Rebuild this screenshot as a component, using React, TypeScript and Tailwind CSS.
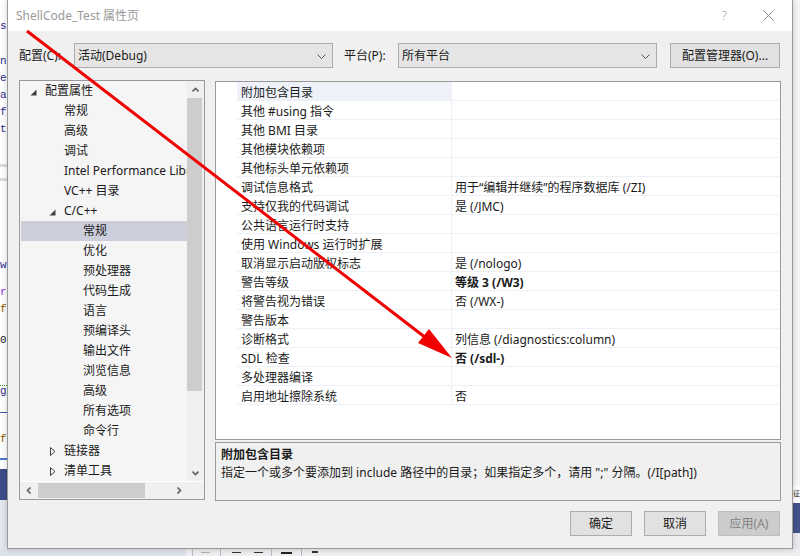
import React from 'react';

type TreeNode = {
  label: string;
  level: 0 | 1 | 2;
  toggle?: 'open' | 'closed';
  selected?: boolean;
};

type PropRow = {
  name: string;
  value?: string;
  bold?: boolean;
};

const treeNodes: TreeNode[] = [
  { label: '配置属性', level: 0, toggle: 'open' },
  { label: '常规', level: 1 },
  { label: '高级', level: 1 },
  { label: '调试', level: 1 },
  { label: 'Intel Performance Libraries', level: 1 },
  { label: 'VC++ 目录', level: 1 },
  { label: 'C/C++', level: 1, toggle: 'open' },
  { label: '常规', level: 2, selected: true },
  { label: '优化', level: 2 },
  { label: '预处理器', level: 2 },
  { label: '代码生成', level: 2 },
  { label: '语言', level: 2 },
  { label: '预编译头', level: 2 },
  { label: '输出文件', level: 2 },
  { label: '浏览信息', level: 2 },
  { label: '高级', level: 2 },
  { label: '所有选项', level: 2 },
  { label: '命令行', level: 2 },
  { label: '链接器', level: 1, toggle: 'closed' },
  { label: '清单工具', level: 1, toggle: 'closed' },
];

const indent = ['pl-[10px]', 'pl-[29px]', 'pl-[48px]'];

const propRows: PropRow[] = [
  { name: '附加包含目录' },
  { name: '其他 #using 指令' },
  { name: '其他 BMI 目录' },
  { name: '其他模块依赖项' },
  { name: '其他标头单元依赖项' },
  { name: '调试信息格式', value: '用于“编辑并继续”的程序数据库 (/ZI)' },
  { name: '支持仅我的代码调试', value: '是 (/JMC)' },
  { name: '公共语言运行时支持' },
  { name: '使用 Windows 运行时扩展' },
  { name: '取消显示启动版权标志', value: '是 (/nologo)' },
  { name: '警告等级', value: '等级 3 (/W3)', bold: true },
  { name: '将警告视为错误', value: '否 (/WX-)' },
  { name: '警告版本' },
  { name: '诊断格式', value: '列信息 (/diagnostics:column)' },
  { name: 'SDL 检查', value: '否 (/sdl-)', bold: true },
  { name: '多处理器编译' },
  { name: '启用地址擦除系统', value: '否' },
];

function Chevron({ dir }: { dir: 'up' | 'down' | 'left' | 'right' }) {
  const points = {
    up: '0.5,4.5 3.5,1.5 6.5,4.5',
    down: '0.5,1.5 3.5,4.5 6.5,1.5',
    left: '4.5,0.5 1.5,3.5 4.5,6.5',
    right: '1.5,0.5 4.5,3.5 1.5,6.5',
  }[dir];
  const horizontal = dir === 'up' || dir === 'down';
  return (
    <svg
      width={horizontal ? 7 : 6}
      height={horizontal ? 6 : 7}
      viewBox={horizontal ? '0 0 7 6' : '0 0 6 7'}
    >
      <polyline points={points} fill="none" stroke="#606060" strokeWidth="1.6" />
    </svg>
  );
}

function EditorBackdrop() {
  return (
    <div className="flex h-full flex-col font-['Liberation_Mono',monospace] text-[11px] leading-none">
      <div className="flex h-[549px]">
        {/* code editor peeking out on the left */}
        <div className="flex w-[7px] flex-col overflow-hidden bg-white">
          <div className="h-[21px]" />
          <div className="h-[16px] text-[#2b2b8f]">s</div>
          <div className="h-[19px]" />
          <div className="h-[17px] text-[#2b2b8f]">n</div>
          <div className="h-[17px] text-[#2b2b8f]">e</div>
          <div className="h-[17px] text-[#2b2b8f]">a</div>
          <div className="h-[17px] text-[#2b2b8f]">f</div>
          <div className="h-[17px] text-[#2b2b8f]">t</div>
          <div className="h-[23px]" />
          <div className="h-[3px] bg-[#dcdcdc]" />
          <div className="h-[11px]" />
          <div className="h-[3px] bg-[#dcdcdc]" />
          <div className="h-[79px]" />
          <div className="h-[17px] text-[#2b2b8f]">w</div>
          <div className="h-[10px]" />
          <div className="h-[17px] text-[#8a2be2]">r</div>
          <div className="h-[17px] text-[#8b5a00]">f</div>
          <div className="h-[14px]" />
          <div className="h-[17px] text-[#1a1a1a]">0</div>
          <div className="h-[30px]" />
          <div className="h-[4px] border-b border-dotted border-[#2e9e2e]" />
          <div className="h-[17px] text-[#2b2b8f]">g</div>
          <div className="h-[9px]" />
          <div className="h-[1px] bg-[#3c5aa6]" />
          <div className="h-[21px]" />
          <div className="h-[17px] text-[#8b5a00]">f</div>
          <div className="h-[7px]" />
          <div className="h-[2px] bg-[#4a78c8]" />
          <div className="h-[9px]" />
          <div className="h-[31px] bg-[#3d4c86]" />
          <div className="flex-1 bg-[#e4e6ee]" />
        </div>
        <div className="flex-1" />
        {/* solution explorer edge on the right */}
        <div className="flex w-[7px] flex-col overflow-hidden bg-[#f5f5f5]">
          <div className="h-[485px]" />
          <div className="h-[18px] bg-white pt-[5px] font-['Noto_Sans_CJK_SC',sans-serif] text-[7px] text-[#222]">
            征
          </div>
          <div className="h-[30px] bg-[#44538c]" />
          <div className="flex-1 bg-[#e9eaef]" />
        </div>
      </div>
      {/* toolbar strip under the dialog */}
      <div className="flex h-[7px]">
        <div className="w-[186px] bg-[#dde1ea]" />
        <div className="flex flex-1 items-start bg-[#eeeef2] pl-[6px]">
          <div className="h-[7px] w-[1px] bg-[#b8b8c0]" />
          <div className="ml-[8px] mt-[3px] h-[1px] w-[9px] bg-[#b0b0b0]" />
          <div className="ml-[10px] h-[7px] w-[1px] bg-[#b8b8c0]" />
          <div className="ml-[11px] mt-[3px] h-[1px] w-[9px] bg-[#333]" />
          <div className="ml-[13px] mt-[3px] h-[1px] w-[9px] bg-[#333]" />
          <div className="ml-[8px] h-[7px] w-[1px] bg-[#b8b8c0]" />
          <div className="ml-[9px] mt-[3px] h-[2px] w-[11px] bg-[#222]" />
          <div className="ml-[9px] h-[7px] w-[1px] bg-[#b8b8c0]" />
          <div className="ml-[10px] mt-[2px] h-[2px] w-[6px] bg-[#333]" />
        </div>
      </div>
    </div>
  );
}

function TitleBar() {
  return (
    <div className="flex h-[31px] shrink-0 items-center bg-white pl-[8px] pr-[18px] text-[#9a9a9a]">
      <span>ShellCode_Test 属性页</span>
      <span className="ml-auto text-[13px] font-light">?</span>
      <svg className="ml-[36px]" width="11" height="11" viewBox="0 0 11 11">
        <path d="M0.5 0.5 L10.5 10.5 M10.5 0.5 L0.5 10.5" stroke="#8a8a8a" strokeWidth="1" />
      </svg>
    </div>
  );
}

function Dropdown({ value }: { value: string }) {
  return (
    <div className="flex h-[25px] w-[259px] items-center justify-between border border-[#acacac] bg-[#e5e5e5] pl-[3px] pr-[6px] pt-[1px]">
      <span>{value}</span>
      <svg width="9" height="5" viewBox="0 0 9 5">
        <polyline points="0.5,0.5 4.5,4.5 8.5,0.5" fill="none" stroke="#555" strokeWidth="1" />
      </svg>
    </div>
  );
}

function ConfigRow() {
  return (
    <div className="flex h-[26px] items-center pt-[1px]">
      <span className="w-[55px]">配置(C):</span>
      <Dropdown value="活动(Debug)" />
      <span className="ml-[11px] w-[54px]">平台(P):</span>
      <Dropdown value="所有平台" />
      <button
        type="button"
        className="ml-[13px] h-[25px] w-[110px] border border-[#adadad] bg-[#e1e1e1]"
      >
        配置管理器(O)...
      </button>
    </div>
  );
}

function Toggle({ kind }: { kind?: 'open' | 'closed' }) {
  if (kind === 'open') {
    return (
      <svg className="mt-[2px]" width="7" height="7" viewBox="0 0 7 7">
        <polygon points="6.5,0.5 6.5,6.5 0.5,6.5" fill="#404040" />
      </svg>
    );
  }
  if (kind === 'closed') {
    return (
      <svg className="ml-[1px]" width="6" height="9" viewBox="0 0 6 9">
        <polygon points="0.5,0.5 5,4.5 0.5,8.5" fill="none" stroke="#404040" strokeWidth="1" />
      </svg>
    );
  }
  return null;
}

function CategoryTree() {
  return (
    <div className="flex h-[420px] w-[186px] shrink-0 flex-col border border-[#9a9a9a] bg-[#f5f5f5]">
      <div className="flex h-[400px]">
        <div className="min-w-0 flex-1 overflow-hidden">
          {treeNodes.map((node, i) => (
            <div
              key={i}
              className={`flex h-[20px] items-center whitespace-nowrap ${indent[node.level]} ${
                node.selected ? 'ml-[1px] bg-[#cccedb]' : ''
              }`}
            >
              <div className={`flex w-[15px] shrink-0 items-center ${node.selected ? '-ml-[1px]' : ''}`}>
                <Toggle kind={node.toggle} />
              </div>
              <span>{node.label}</span>
            </div>
          ))}
        </div>
        <div className="flex w-[17px] shrink-0 flex-col bg-[#f0f0f0]">
          <div className="flex h-[17px] items-center justify-center">
            <Chevron dir="up" />
          </div>
          <div className="mr-[2px] h-[293px] bg-[#cdcdcd]" />
          <div className="flex-1" />
          <div className="flex h-[17px] items-center justify-center">
            <Chevron dir="down" />
          </div>
        </div>
      </div>
      <div className="flex h-[18px] border-t border-white">
        <div className="flex flex-1 items-center bg-[#f0f0f0]">
          <div className="flex h-full w-[17px] items-center justify-center">
            <Chevron dir="left" />
          </div>
          <div className="ml-[1px] h-[15px] w-[107px] bg-[#cdcdcd]" />
          <div className="flex-1" />
          <div className="flex h-full w-[17px] items-center justify-center">
            <Chevron dir="right" />
          </div>
        </div>
        <div className="w-[17px] bg-[#f0f0f0]" />
      </div>
    </div>
  );
}

function PropertyGrid() {
  return (
    <div className="mt-[1px] h-[359px] border border-[#9a9a9a] bg-white">
      {propRows.map((row, i) => (
        <div key={i} className="flex h-[19px]">
          <div className="w-[21px] shrink-0" />
          <div
            className={`flex w-[215px] shrink-0 items-center whitespace-nowrap border-r border-b border-[#edf0f4] pl-[4px] pt-[4px] ${
              i === 0 ? 'bg-[#eef2f8]' : ''
            }`}
          >
            {row.name}
          </div>
          <div
            className={`flex flex-1 items-center whitespace-nowrap border-b border-[#edf0f4] pl-[3px] pt-[4px] ${
              row.bold ? 'font-bold' : ''
            }`}
          >
            {row.value}
          </div>
        </div>
      ))}
    </div>
  );
}

function Description() {
  return (
    <div className="mt-[2px] h-[59px] border border-[#9a9a9a] px-[5px] pt-[3px]">
      <div className="h-[18px] font-bold leading-[18px]">附加包含目录</div>
      <div className="leading-[18px] whitespace-nowrap">
        指定一个或多个要添加到 include 路径中的目录；如果指定多个，请用 ";" 分隔。(/I[path])
      </div>
    </div>
  );
}

function ButtonRow() {
  return (
    <div className="mt-[10px] mr-[1px] flex h-[25px] justify-end gap-[12px]">
      <button type="button" className="w-[62px] border border-[#adadad] bg-[#e1e1e1]">
        确定
      </button>
      <button type="button" className="w-[62px] border border-[#adadad] bg-[#e1e1e1]">
        取消
      </button>
      <button
        type="button"
        disabled
        className="w-[62px] border border-[#bfbfbf] bg-[#cccccc] text-[#838383]"
      >
        应用(A)
      </button>
    </div>
  );
}

function Arrow() {
  return (
    <svg className="pointer-events-none absolute inset-0" width="800" height="556">
      <line x1="27" y1="31" x2="426" y2="338" stroke="#f00000" strokeWidth="3" />
      <polygon points="452,358 418,343 429,329" fill="#f00000" />
    </svg>
  );
}

export default function App() {
  return (
    <div className="relative h-[556px] w-[800px] overflow-hidden bg-[#f5f5f5] font-['Noto_Sans','Noto_Sans_CJK_SC',sans-serif] text-[12px] text-[#1a1a1a]">
      <EditorBackdrop />
      <div className="absolute left-[7px] top-0 flex h-[549px] w-[786px] flex-col border-x border-b border-[#9a9a9a] bg-[#f0f0f0] shadow-[0_0_6px_rgba(0,0,0,0.2)]">
        <TitleBar />
        <div className="flex flex-1 flex-col px-[11px] pt-[11px] pb-[12px]">
          <ConfigRow />
          <div className="mt-[12px] flex h-[421px] gap-[10px]">
            <CategoryTree />
            <div className="flex flex-1 flex-col">
              <PropertyGrid />
              <Description />
            </div>
          </div>
          <ButtonRow />
        </div>
      </div>
      <Arrow />
    </div>
  );
}
